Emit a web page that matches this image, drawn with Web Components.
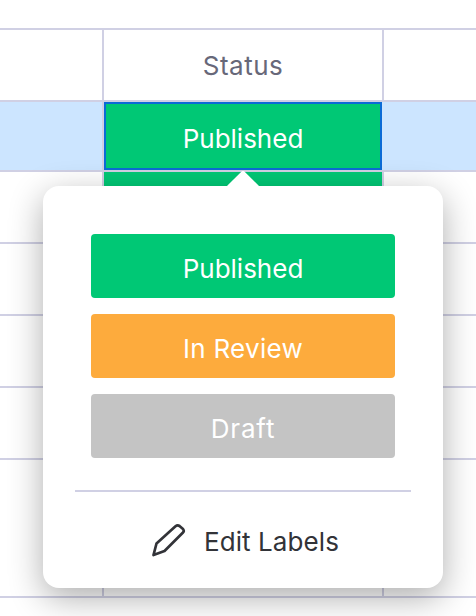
<!DOCTYPE html>
<html><head><meta charset="utf-8">
<style>
html,body{margin:0;padding:0;background:#fff;width:476px;height:616px;overflow:hidden;font-family:Inter,"Liberation Sans",sans-serif}
</style></head><body>
<template id="t-board">
<style>
:host{display:block;position:relative;width:476px;height:616px;overflow:hidden;background:#fff;--line:#d0d0e4}
.grid{display:grid;grid-template-columns:102px 2px 278px 2px 92px;grid-template-rows:28px 2px 70px 2px 68px 2px 70px 2px 70px 2px 70px 2px 70px 2px 136px 2px 18px}
.h{grid-column:1/-1;background:var(--line)}
.c{background:#fff}
.v{background:var(--line)}
</style>
<div class="grid" id="g"></div>
<slot></slot>
</template>
<template id="t-cell">
<style>
:host{display:flex;align-items:center;justify-content:center;box-sizing:border-box;font-size:26px;color:#676879;padding-top:var(--pt,1px);letter-spacing:var(--ls,0)}
</style><slot></slot>
</template>
<template id="t-label">
<style>
:host{display:flex;align-items:center;justify-content:center;box-sizing:border-box;height:64px;padding-top:4px;border-radius:4px;color:#fff;font-size:26px;background:var(--bg);letter-spacing:var(--ls,0)}
</style><slot></slot>
</template>
<template id="t-popover">
<style>
:host{display:block;position:absolute;left:43px;top:186px;width:400px;height:402px;box-sizing:border-box;background:#fff;border-radius:16px;box-shadow:0 10px 34px rgba(0,0,0,.32)}
.arrow{position:absolute;left:183px;top:-15px;width:34px;height:15px;overflow:hidden}
.arrow::before{content:"";position:absolute;left:5px;top:4px;width:24px;height:24px;background:#fff;transform:rotate(45deg);border-radius:2px}
.labels{display:flex;flex-direction:column;gap:16px;padding:48px 48px 32px}
hr{margin:0 32px;border:0;height:2px;background:#d0d0e4}
.edit{display:flex;align-items:center;justify-content:center;gap:18px;height:98px;padding-left:3px;box-sizing:border-box;font-size:26px;color:#323338;letter-spacing:.1px}
svg{width:36px;height:36px;display:block}
</style>
<div class="arrow"></div>
<div class="labels"><slot></slot></div>
<hr>
<div class="edit"><svg viewBox="0 0 36 36" fill="none" stroke="#323338" stroke-width="2.7" stroke-linejoin="round" stroke-linecap="round"><path d="M3.5 32 6.500 20.500 25.500 3.300Q27.500 1.700 29.500 3L33 6Q34.500 8 33 9.500L14.500 28Z"/></svg><span>Edit Labels</span></div>
</template>
<script>
function def(name,tid,fn){customElements.define(name,class extends HTMLElement{constructor(){super();const s=this.attachShadow({mode:'open'});s.appendChild(document.getElementById(tid).content.cloneNode(true));if(fn)fn(s,this)}})}
def('status-cell','t-cell');
def('status-label','t-label');
def('label-popover','t-popover');
def('status-board','t-board',(s)=>{
 const g=s.getElementById('g');
 const el=(c,st,txt,tag)=>{const d=document.createElement(tag||'div');d.className=c||'';if(st)d.style.cssText=st;if(txt)d.textContent=txt;g.appendChild(d);return d};
 el('c','grid-column:1/-1');
 for(let r=0;r<9;r++){
  el('h');
  if(r===0){el('c');el('v');el('','background:#fff;--ls:.5px','Status','status-cell');el('v');el('c')}
  else if(r===1){
   el('c','background:#cce5ff');el('v');
   const c=el('','background:#00c875;border:2px solid #0b6bd6;--pt:4px','Published','status-cell');c.style.color='#fff';
   el('v','background:#cce5ff');el('c','background:#cce5ff');
  }else if(r===2){el('c');el('v');el('c','background:#00c875');el('v');el('c')}
  else if(r===7){el('c','grid-column:1/-1')}
  else{el('c');el('v');el('c');el('v');el('c')}
 }
});
</script>
<status-board>
<label-popover>
<status-label style="--bg:#00c875">Published</status-label>
<status-label style="--bg:#fdab3d;--ls:.3px">In Review</status-label>
<status-label style="--bg:#c4c4c4;--ls:.8px">Draft</status-label>
</label-popover>
</status-board>
</body></html>
